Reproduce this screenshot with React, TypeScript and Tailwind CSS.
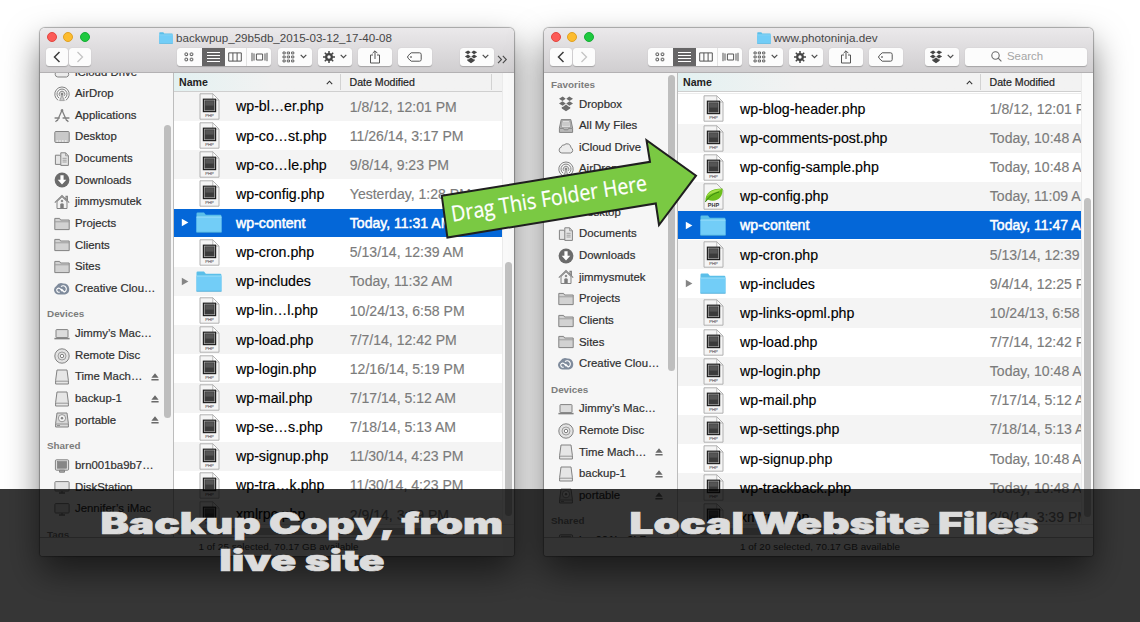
import type { ReactNode } from "react";

type Entry = { name: string; date: string; kind?: "php" | "leaf" | "folder"; selected?: boolean };
type SideItem = { label: string; icon?: string; eject?: boolean; heading?: boolean };

const LEFT_FILES: Entry[] = [
  { name: "wp-bl…er.php", date: "1/8/12, 12:01 PM" },
  { name: "wp-co…st.php", date: "11/26/14, 3:17 PM" },
  { name: "wp-co…le.php", date: "9/8/14, 9:23 PM" },
  { name: "wp-config.php", date: "Yesterday, 1:28 PM" },
  { name: "wp-content", date: "Today, 11:31 AM", kind: "folder", selected: true },
  { name: "wp-cron.php", date: "5/13/14, 12:39 AM" },
  { name: "wp-includes", date: "Today, 11:32 AM", kind: "folder" },
  { name: "wp-lin…l.php", date: "10/24/13, 6:58 PM" },
  { name: "wp-load.php", date: "7/7/14, 12:42 PM" },
  { name: "wp-login.php", date: "12/16/14, 5:19 PM" },
  { name: "wp-mail.php", date: "7/17/14, 5:12 AM" },
  { name: "wp-se…s.php", date: "7/18/14, 5:13 AM" },
  { name: "wp-signup.php", date: "11/30/14, 4:23 PM" },
  { name: "wp-tra…k.php", date: "11/30/14, 4:23 PM" },
  { name: "xmlrpc.php", date: "2/9/14, 3:39 PM" },
];

const RIGHT_FILES: Entry[] = [
  { name: "wp-blog-header.php", date: "1/8/12, 12:01 PM" },
  { name: "wp-comments-post.php", date: "Today, 10:48 AM" },
  { name: "wp-config-sample.php", date: "Today, 10:48 AM" },
  { name: "wp-config.php", date: "Today, 11:09 AM", kind: "leaf" },
  { name: "wp-content", date: "Today, 11:47 AM", kind: "folder", selected: true },
  { name: "wp-cron.php", date: "5/13/14, 12:39 AM" },
  { name: "wp-includes", date: "9/4/14, 12:25 PM", kind: "folder" },
  { name: "wp-links-opml.php", date: "10/24/13, 6:58 PM" },
  { name: "wp-load.php", date: "7/7/14, 12:42 PM" },
  { name: "wp-login.php", date: "Today, 10:48 AM" },
  { name: "wp-mail.php", date: "7/17/14, 5:12 AM" },
  { name: "wp-settings.php", date: "7/18/14, 5:13 AM" },
  { name: "wp-signup.php", date: "Today, 10:48 AM" },
  { name: "wp-trackback.php", date: "Today, 10:48 AM" },
  { name: "xmlrpc.php", date: "2/9/14, 3:39 PM" },
];

const COMMON: SideItem[] = [
  { label: "iCloud Drive", icon: "cloud" },
  { label: "AirDrop", icon: "airdrop" },
  { label: "Applications", icon: "apps" },
  { label: "Desktop", icon: "desktop" },
  { label: "Documents", icon: "docs" },
  { label: "Downloads", icon: "down" },
  { label: "jimmysmutek", icon: "home" },
  { label: "Projects", icon: "folder" },
  { label: "Clients", icon: "folder" },
  { label: "Sites", icon: "folder" },
  { label: "Creative Clou…", icon: "cc" },
  { label: "Devices", heading: true },
  { label: "Jimmy’s Mac…", icon: "laptop" },
  { label: "Remote Disc", icon: "disc" },
  { label: "Time Mach…", icon: "drive", eject: true },
  { label: "backup-1", icon: "drive", eject: true },
  { label: "portable", icon: "hdd", eject: true },
  { label: "Shared", heading: true },
  { label: "brn001ba9b7…", icon: "pc" },
];

const LEFT_SIDE: SideItem[] = [
  ...COMMON,
  { label: "DiskStation", icon: "screen" },
  { label: "Jennifer’s iMac", icon: "screen" },
  { label: "Tags", heading: true },
];

const RIGHT_SIDE: SideItem[] = [
  { label: "Favorites", heading: true },
  { label: "Dropbox", icon: "dropbox" },
  { label: "All My Files", icon: "allfiles" },
  ...COMMON,
];

function DropboxIcon({ color, size }: { color: string; size: number }) {
  return (
    <svg width={size} height={size} viewBox="0 0 16 16" className="shrink-0">
      <g fill={color}>
        <path d="M4.700.6 7.700 2.700 4.500 4.900 1 2.700z" />
        <path d="M11.300.6 8.300 2.700 11.500 4.900 15 2.700z" />
        <path d="M1 7.500 4.500 5.200 7.700 7.500 4.700 9.800z" />
        <path d="M15 7.500 11.500 5.200 8.300 7.500 11.300 9.800z" />
        <path d="M3.800 10.700 4.800 10.900 8 8.500 11.200 10.900 12.200 10.700V12.400L8 15.200 3.800 12.400z" />
      </g>
    </svg>
  );
}

function SideIcon({ name }: { name: string }) {
  if (name === "dropbox") return <DropboxIcon color="#6c6c6c" size={16} />;
  const art: Record<string, ReactNode> = {
    cloud: <path d="M3.8 13a3 3 0 0 1-.4-5.900 2 2 0 0 1 2.600-2 4 4 0 0 1 7 2.600 2.800 2.800 0 0 1-.4 5.300z" fill="#ececec" />,
    airdrop: (
      <g fill="none">
        <path d="M4.200 14.300a7.200 7.200 0 1 1 7.600 0M5.200 12.200a5 5 0 1 1 5.600 0M6.200 10.200a2.800 2.800 0 1 1 3.600 0" />
        <circle cx="8" cy="8" r="1" fill="#6d6d6d" />
        <path d="M8 9 5.600 14.600h4.800z" fill="#c9c9c9" strokeWidth=".6" />
      </g>
    ),
    apps: (
      <g fill="none" strokeWidth="1.300">
        <path d="M8 2.200 12.800 13M8 2.200 3.200 13M.6 10h5.200M8.600 10h6.800M1.600 14l1.200-2M14.200 14l-1-2" />
        <circle cx="8" cy="2.400" r=".7" />
      </g>
    ),
    desktop: (
      <g>
        <rect x=".8" y="2.500" width="14.400" height="11" rx="1" fill="#c9c9c9" />
        <path d="M2.500 12h1.600M5.200 12h1.600M8 12h1.600M11 12h1.600" stroke="#fff" strokeWidth="1.200" />
      </g>
    ),
    docs: (
      <g fill="#e5e5e5">
        <path d="M1.400 4.200h4.400l2 2.200v7H1.400z" />
        <path d="M6.800 1.800h4.800l2.800 3v9.600H6.800z" />
        <path d="M11.600 1.800v3h2.800M8.500 7.300h4.200M8.500 9.200h4.200M8.500 11h4.200" fill="none" strokeWidth=".7" />
      </g>
    ),
    down: (
      <g stroke="none">
        <circle cx="8" cy="8" r="7.400" fill="#6b6b6b" />
        <path d="M6.400 3.300h3.200v4.500h2.700L8 12.600 3.700 7.800h2.700z" fill="#fff" />
      </g>
    ),
    home: (
      <g fill="#f2f2f2">
        <path d="M3 7.600v6.900h10V7.600L8 2.800z" />
        <path d="M.8 8.600 8 1.600 15.200 8.600M12 5.200V2.400h1.400v4.100" fill="none" strokeWidth="1.100" />
        <path d="M6.800 14.500v-4.600h2.400v4.600z" fill="#777" />
        <circle cx="8" cy="7" r=".8" fill="#777" />
      </g>
    ),
    folder: (
      <g>
        <path d="M.8 13.600V2.400h4.800l1 1.600h8.600v9.600z" fill="#d2d2d2" />
        <path d="M.8 5.800h14.400" stroke="#999" strokeWidth=".9" />
      </g>
    ),
    cc: (
      <g fill="none" stroke="none">
        <path d="M4.600 13.600A4.700 4.700 0 0 1 2.300 4.900 6 6 0 0 1 9.400 2.400 5.700 5.700 0 0 1 11 13.600z" fill="#7f8b9c" />
        <path d="M8.400 10.300 6 7.600a2 2 0 1 0-.3 3.300M7 5.600a3.200 3.200 0 1 1 3.200 5.400L7.400 8" stroke="#fff" strokeWidth="1.100" />
      </g>
    ),
    laptop: (
      <g>
        <rect x="2" y="3.600" width="12" height="8" rx=".6" fill="#dcdcdc" />
        <path d="M.4 12.600h15.200" strokeWidth="1.500" />
      </g>
    ),
    disc: (
      <g>
        <circle cx="8" cy="8" r="7.200" fill="#e2e2e2" />
        <circle cx="8" cy="8" r="4" fill="none" strokeWidth=".7" />
        <circle cx="8" cy="8" r="1.700" fill="#fff" />
      </g>
    ),
    drive: (
      <g>
        <path d="M3 1h10l1.400 10.600V15H1.600v-3.400z" fill="#e6e6e6" />
        <path d="M1.600 12.200h12.800" strokeWidth=".8" />
      </g>
    ),
    hdd: (
      <g>
        <path d="M3 1h10l1.400 10.600V15H1.600v-3.400z" fill="#d8d8d8" />
        <circle cx="8" cy="6.200" r="3.600" fill="#f3f3f3" strokeWidth=".8" />
        <circle cx="8" cy="6.200" r=".9" fill="#777" />
        <path d="M1.600 12h12.800M3 13.500h3" strokeWidth=".8" />
      </g>
    ),
    pc: (
      <g>
        <rect x="1.400" y="1.800" width="13.200" height="10.400" rx="1" fill="#ddd" />
        <rect x="3.400" y="3.600" width="9.200" height="6.600" fill="#868686" strokeWidth=".7" />
        <path d="M5.500 12.200h5v2h-5z" fill="#aaa" />
      </g>
    ),
    screen: (
      <g>
        <rect x=".9" y="2.600" width="14.200" height="9.400" rx=".8" fill="#e3e3e3" />
        <path d="M5 14h6M8 12v2" strokeWidth="1.300" />
      </g>
    ),
    allfiles: (
      <g>
        <path d="M3.200 1.600h9.600l1.800 8.600V14.400H1.400v-4.200z" fill="#b9b9b9" />
        <path d="M4.300 2.800h7.400l1 6.400H3.300z" fill="#f2f2f2" strokeWidth=".6" />
        <path d="M4.600 5h6.800M4.300 7h7.400" strokeWidth=".7" />
        <path d="M2 10.400h3.400l.8 1.400h3.600l.8-1.400H14" fill="none" strokeWidth=".9" />
      </g>
    ),
  };
  return (
    <svg width="16" height="16" viewBox="0 0 16 16" className="shrink-0" stroke="#828282" strokeWidth="1">
      {art[name]}
    </svg>
  );
}

function BlueFolder({ className }: { className: string }) {
  return (
    <svg viewBox="0 0 26 21" preserveAspectRatio="none" className={className}>
      <path d="M.5 20V1.800Q.5.6 1.700.6H8l1.800 2.200h14.400q1.200 0 1.200 1.200V20z" fill="#5bbfe9" />
      <path d="M.5 5h25v15.200H.5z" fill="#72cdf7" />
      <path d="M.5 5h25" stroke="#9ddff9" strokeWidth="1" />
      <path d="M.5 20.300h25" stroke="#49a8d4" strokeWidth=".8" />
    </svg>
  );
}

function FileIcon({ leaf }: { leaf?: boolean }) {
  return (
    <svg width="21" height="27" viewBox="0 0 21 27">
      <path d="M1 .8h12.800L20 7v19.200H1z" fill="#f5f5f5" stroke="#a9a9a9" strokeWidth=".9" />
      {leaf ? (
        <g>
          <path d="M2.500 18.500C2 10 8 5.500 19.500 5.500 20.500 14 14 20 5 16.800z" fill="#6cbf1c" />
          <path d="M3.500 13.500C7 7.500 12 6.500 19 6 15 9 9 9.500 3.500 13.500z" fill="#a5df4b" />
          <path d="M2.300 19C6 13 11 10.500 16 9" fill="none" stroke="#2f7d0c" strokeWidth=".9" />
        </g>
      ) : (
        <g>
          <path d="M13.800.8V7H20z" fill="#fff" stroke="#aaa" strokeWidth=".8" />
          <rect x="3.800" y="5.600" width="13.400" height="13.600" fill="#1c1c1c" />
          <rect x="5.300" y="7.100" width="10.400" height="10.600" fill="#3b3b3b" stroke="#b5b5b5" strokeWidth=".7" />
          <rect x="6.400" y="8.200" width="8.200" height="4.400" fill="#555" />
        </g>
      )}
      <text x="10.500" y="24.300" textAnchor="middle" fontSize={leaf ? 5.5 : 4.2} fontWeight={leaf ? 700 : 400} fontFamily="Liberation Sans, sans-serif" fill="#333">
        PHP
      </text>
    </svg>
  );
}

function Chevron() {
  return (
    <svg width="7" height="5" viewBox="0 0 7 5" className="shrink-0">
      <path d="M.7.9 3.500 3.700 6.300.9" fill="none" stroke="#4b4b4b" strokeWidth="1.200" />
    </svg>
  );
}

const BTN = "flex h-[18.500px] shrink-0 items-center justify-center rounded-[3px] bg-[#fcfcfc] shadow-[0_.5px_1px_rgba(0,0,0,.22)]";

function Toolbar({ search }: { search?: boolean }) {
  return (
    <div className="flex h-[18.500px] items-center pl-[6px]">
      <div className={`${BTN} w-[22px]`}>
        <svg width="8" height="12" viewBox="0 0 8 12"><path d="M6.500 1 1.500 6l5 5" fill="none" stroke="#3c3c3c" strokeWidth="1.500" /></svg>
      </div>
      <div className={`${BTN} ml-px w-[22px]`}>
        <svg width="8" height="12" viewBox="0 0 8 12"><path d="M1.500 1l5 5-5 5" fill="none" stroke="#c4c4c4" strokeWidth="1.300" /></svg>
      </div>
      <div className={`${BTN} w-[94px] overflow-hidden ${search ? "ml-[53px]" : "ml-[86px]"}`}>
        <div className="flex h-full w-[24.500px] items-center justify-center">
          <svg width="10" height="10" viewBox="0 0 10 10" fill="none" stroke="#555" strokeWidth="1">
            <rect x="1" y="1" width="2.600" height="2.600" rx=".6" /><rect x="6.200" y="1" width="2.600" height="2.600" rx=".6" />
            <rect x="1" y="6.200" width="2.600" height="2.600" rx=".6" /><rect x="6.200" y="6.200" width="2.600" height="2.600" rx=".6" />
          </svg>
        </div>
        <div className="flex h-full w-[23px] items-center justify-center bg-[#666566]">
          <svg width="13" height="11" viewBox="0 0 13 11"><path d="M0 1.500h13M0 4.500h13M0 7.500h13M0 10.500h13" stroke="#fff" strokeWidth="1" /></svg>
        </div>
        <div className="flex h-full w-[22.500px] items-center justify-center border-r border-[#e2e2e2]">
          <svg width="14" height="10" viewBox="0 0 14 10" fill="none" stroke="#555"><path d="M.7.9h12.600v8.200H.7zM4.900.9v8.200M9.100.9v8.200" /></svg>
        </div>
        <div className="flex h-full w-[24px] items-center justify-center">
          <svg width="17" height="10" viewBox="0 0 17 10" fill="none" stroke="#555"><path d="M5.400 2h6.200v6H5.400zM1 .8v8.400M3 1.400v7.200M14 1.400v7.200M16 .8v8.400" /></svg>
        </div>
      </div>
      <div className={`${BTN} ml-[6.500px] w-[34px] gap-[5px]`}>
        <svg width="13" height="12" viewBox="0 0 13 12" fill="none" stroke="#555" strokeWidth=".9">
          <path d="M1 1h2.200v1.900H1zM5.300 1h2.200v1.900H5.300zM9.600 1h2.200v1.900H9.600zM1 5h2.200v1.900H1zM5.300 5h2.200v1.900H5.300zM9.600 5h2.200v1.900H9.600zM1 9h2.200v1.900H1zM5.300 9h2.200v1.900H5.300zM9.600 9h2.200v1.900H9.600z" />
        </svg>
        <Chevron />
      </div>
      <div className={`${BTN} ml-[6px] w-[34px] gap-[5px]`}>
        <svg width="12" height="12" viewBox="0 0 12 12" stroke="#444" fill="none">
          <circle cx="6" cy="6" r="2.800" strokeWidth="2.200" />
          <path d="M6 0v3M6 9v3M0 6h3M9 6h3M1.800 1.800l2 2M8.200 8.200l2 2M10.200 1.800l-2 2M1.800 10.200l2-2" strokeWidth="1.500" />
        </svg>
        <Chevron />
      </div>
      <div className={`${BTN} ml-[6px] w-[34px]`}>
        <svg width="12" height="14" viewBox="0 0 12 14" fill="none" stroke="#555"><path d="M4 5H1.500v8h9V5H8M6 9V1M3.600 3.200 6 .8l2.400 2.400" /></svg>
      </div>
      <div className={`${BTN} ml-[6px] w-[34px]`}>
        <svg width="15" height="10" viewBox="0 0 15 10" fill="none" stroke="#555"><path d="M4.200.8h8.300q1.700 0 1.700 1.700v5q0 1.700-1.700 1.700H4.200L.8 6V4z" /><circle cx="4" cy="5" r=".5" /></svg>
      </div>
      <div className={`${BTN} w-[33.500px] gap-[4px] ${search ? "ml-[22.500px]" : "ml-[28.500px]"}`}>
        <DropboxIcon color="#454545" size={14} />
        <Chevron />
      </div>
      {search ? (
        <div className={`${BTN} ml-[6px] w-[122.500px] gap-[4.500px] pr-[17px]`}>
          <svg width="11" height="11" viewBox="0 0 11 11" fill="none" stroke="#6a6a6a" strokeWidth="1.100"><circle cx="4.500" cy="4.500" r="3.700" /><path d="M7.200 7.200 10.400 10.400" /></svg>
          <span className="text-[11.400px] leading-none text-[#a5a5a5]">Search</span>
        </div>
      ) : (
        <svg width="11" height="9" viewBox="0 0 11 9" className="ml-[3.500px] mt-[5px] shrink-0" fill="none" stroke="#4a4a4a" strokeWidth="1.100"><path d="M1 .8 4.500 4.500 1 8.200M5.800.8 9.300 4.500 5.800 8.200" /></svg>
      )}
    </div>
  );
}

function Sidebar({ items, start, thumb }: { items: SideItem[]; start: string; thumb: string }) {
  return (
    <div className="relative h-full w-[134px] shrink-0 overflow-hidden border-r border-[#bdbdbd] bg-[#f6f6f6]">
      <div className={start}>
        {items.map((it) =>
          it.heading ? (
            <div key={it.label} className="flex h-[23.600px] items-center pl-[7px] pt-[6px] text-[9.900px] font-bold leading-none text-[#7c7c7c]">
              {it.label}
            </div>
          ) : (
            <div key={it.label} className="flex h-[21.650px] items-center gap-[5px] pl-[14px] text-[11.400px] leading-none text-[#2f2f2f] [-webkit-text-stroke:.2px_#2f2f2f]">
              <SideIcon name={it.icon!} />
              <span className="w-[79px] shrink-0 whitespace-nowrap">{it.label}</span>
              {it.eject && (
                <svg width="8" height="8" viewBox="0 0 8 8" className="-ml-[8px] shrink-0"><path d="M4 .3 7.600 4.700H.4zM.4 6h7.200v1.500H.4z" fill="#6a6a6a" /></svg>
              )}
            </div>
          ),
        )}
      </div>
      <div className={`absolute right-[2px] w-[7px] rounded-full bg-[#bebebe] ${thumb}`} />
    </div>
  );
}

function FinderWindow(props: {
  className: string;
  title: string;
  titleSize: string;
  search?: boolean;
  files: Entry[];
  side: SideItem[];
  sideStart: string;
  sideThumb: string;
  nameCol: string;
  firstGray: boolean;
  listTop: string;
  listThumb: string;
  hThumb: string;
  status: string;
}) {
  const p = props;
  return (
    <div className={`absolute flex flex-col overflow-hidden rounded-t-[5px] rounded-b-[3px] bg-white shadow-[0_0_1px_1px_rgba(0,0,0,.3),0_16px_34px_rgba(0,0,0,.52)] ${p.className}`}>
      <div className="h-[45px] shrink-0 border-b border-[#b3b1b3] bg-linear-to-b from-[#ebe9eb] to-[#d0ced0]">
        <div className="relative flex h-[19.500px] items-center justify-center">
          <div className="absolute left-[6.500px] top-[4px] flex gap-[6.600px]">
            <span className="size-[10px] rounded-full border border-[#e2463f] bg-[#fc5b57]" />
            <span className="size-[10px] rounded-full border border-[#dfa023] bg-[#fdbc2e]" />
            <span className="size-[10px] rounded-full border border-[#14ad35] bg-[#1fc93f]" />
          </div>
          <BlueFolder className="mr-[3px] h-[12px] w-[14px]" />
          <span className={`whitespace-nowrap leading-none text-[#474747] ${p.titleSize}`}>{p.title}</span>
        </div>
        <Toolbar search={p.search} />
      </div>
      <div className="flex h-[464px] shrink-0">
        <Sidebar items={p.side} start={p.sideStart} thumb={p.sideThumb} />
        <div className="flex min-w-0 flex-1 flex-col">
          <div className="flex h-[451px] shrink-0">
            <div className="min-w-0 flex-1 overflow-hidden">
              <div className="flex h-[19px] border-b border-[#cfcfcf] bg-linear-to-r from-[#e3f1f1] via-[#f2f2f2] via-30% to-[#f2f2f2] text-[10.600px] leading-none text-[#222]">
                <div className={`flex shrink-0 items-center justify-between pl-[5px] pr-[7px] font-bold ${p.nameCol}`}>
                  <span>Name</span>
                  <svg width="7" height="5" viewBox="0 0 7 5"><path d="M.8 4.200 3.500 1.200 6.200 4.200" fill="none" stroke="#333" strokeWidth="1.100" /></svg>
                </div>
                <div className="my-px flex w-[151.500px] shrink-0 items-center border-x border-[#d2d2d2] pl-[8.500px] [-webkit-text-stroke:.2px_#222]">Date Modified</div>
              </div>
              <div className={p.listTop}>
                {p.files.map((f, i) => {
                  const gray = i % 2 === (p.firstGray ? 0 : 1);
                  return (
                    <div
                      key={f.name + i}
                      className={`flex h-[29.150px] items-center whitespace-nowrap leading-none ${f.selected ? "border-b border-white bg-[#0467d8] text-white [-webkit-text-stroke:.5px_#fff]" : gray ? "bg-[#f4f4f4] text-black [-webkit-text-stroke:.15px_currentColor]" : "bg-white text-black [-webkit-text-stroke:.15px_currentColor]"}`}
                    >
                      <div className={`flex shrink-0 items-center ${p.nameCol}`}>
                        <span className="flex w-[22px] justify-end pr-[7px]">
                          {f.kind === "folder" && (
                            <svg width="8" height="9" viewBox="0 0 8 9"><path d="M.8.8 7.400 4.500.8 8.200z" fill={f.selected ? "#fff" : "#858585"} /></svg>
                          )}
                        </span>
                        <span className="flex w-[26px] justify-center">
                          {f.kind === "folder" ? <BlueFolder className="h-[21px] w-[26px]" /> : <FileIcon leaf={f.kind === "leaf"} />}
                        </span>
                        <span className="pl-[14px] text-[14.200px]">{f.name}</span>
                      </div>
                      <span className={`pl-[9.800px] text-[14.050px] ${f.selected ? "text-white" : "text-[#7b7b7b]"}`}>{f.date}</span>
                    </div>
                  );
                })}
              </div>
            </div>
            <div className="flex w-[12.500px] shrink-0 justify-center border-l border-[#ebebeb] bg-[#fafafa]">
              <div className={`w-[7px] rounded-full bg-[#c1c1c1] ${p.listThumb}`} />
            </div>
          </div>
          <div className="flex h-[13px] items-center border-t border-[#e4e4e4] bg-[#fafafa] pl-[3px]">
            <div className={`h-[7px] rounded-full bg-[#c1c1c1] ${p.hThumb}`} />
          </div>
        </div>
      </div>
      <div className="flex flex-1 items-center justify-center border-t border-[#b5b5b5] bg-[#eeeeee] pl-[3px] text-[9.900px] leading-none tracking-[.04px] text-[#3a3a3a]">
        {p.status}
      </div>
    </div>
  );
}

const CAPTION = "whitespace-nowrap text-center font-['Inter',sans-serif] text-[29.500px] font-black leading-[36.500px] text-[#dddddd] [-webkit-text-stroke:.7px_#dddddd]";

export default function App() {
  return (
    <div className="relative h-[622px] w-[1140px] overflow-hidden bg-white font-['Liberation_Sans',Arial,sans-serif]">
      <FinderWindow
        className="left-[40px] top-[28px] h-[528px] w-[474px]"
        title="backwpup_29b5db_2015-03-12_17-40-08"
        titleSize="text-[11.600px] mr-[3px]"
        files={LEFT_FILES}
        side={LEFT_SIDE}
        sideStart="-mt-[11.600px]"
        sideThumb="top-[52px] h-[293px]"
        nameCol="w-[166px]"
        firstGray
        listTop=""
        listThumb="mt-[189px] h-[254px]"
        hThumb="w-[283px]"
        status="1 of 25 selected, 70.17 GB available"
      />
      <FinderWindow
        className="left-[544px] top-[28px] h-[528px] w-[549px]"
        title="www.photoninja.dev"
        titleSize="text-[11.700px] mr-[3px]"
        search
        files={RIGHT_FILES}
        side={RIGHT_SIDE}
        sideStart="-mt-[3.200px]"
        sideThumb="top-[2px] h-[296px]"
        nameCol="w-[302px]"
        firstGray={false}
        listTop="mt-[1.400px] border-t border-[#ececec]"
        listThumb="mt-[125px] h-[319px]"
        hThumb="w-[206px]"
        status="1 of 20 selected, 70.17 GB available"
      />

      <svg className="absolute left-[430px] top-[130px]" width="280" height="120" viewBox="430 130 280 120">
        <path d="M441.800 195.800 650 161.800 646.500 140.200 696 175.700 659 225 655.800 203.500 447.400 237.600z" fill="#7ac943" stroke="#1f1f1f" strokeWidth="2" />
        <text
          transform="translate(452.500 221.800) rotate(-9.200)"
          fontSize="21.800"
          textLength="198"
          lengthAdjust="spacingAndGlyphs"
          fill="#fff"
          stroke="#fff"
          strokeWidth=".25"
          fontFamily="'Open Sans', 'Noto Sans', sans-serif"
        >
          Drag This Folder Here
        </text>
      </svg>

      <div className="absolute inset-x-0 bottom-0 flex h-[133px] bg-black/79 pt-[16px]">
        <div className="flex w-[604px] flex-col items-center">
          <div className={`${CAPTION} scale-x-[1.440]`}>Backup Copy, from<br />live site</div>
        </div>
        <div className="flex w-[461px] flex-col items-center">
          <div className={`${CAPTION} scale-x-[1.440]`}>Local Website Files</div>
        </div>
      </div>
    </div>
  );
}
